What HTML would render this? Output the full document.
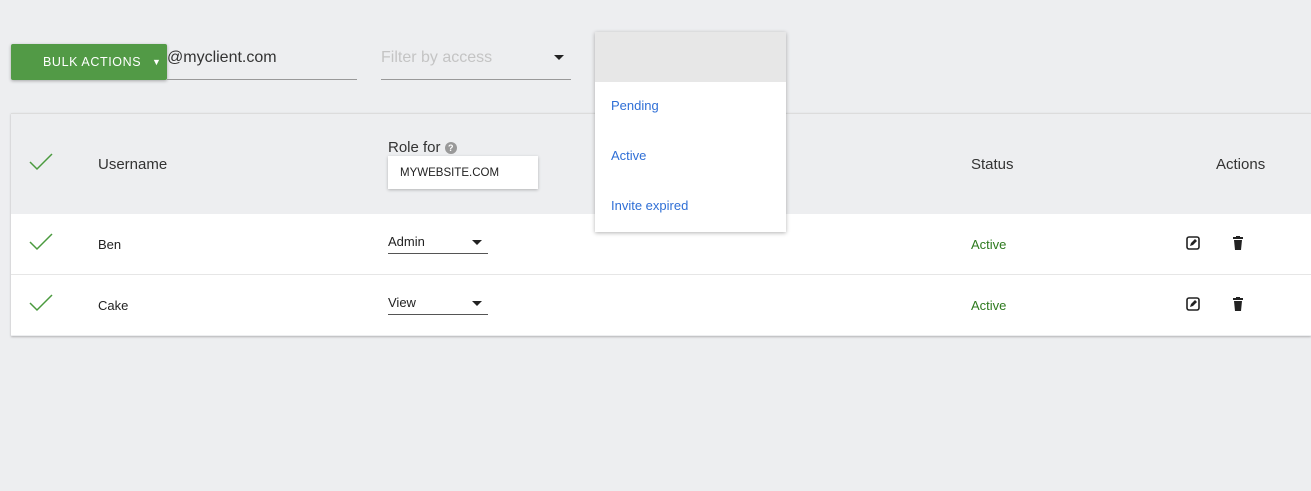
<!DOCTYPE html>
<html><head><meta charset="utf-8"><style>
*{box-sizing:border-box;margin:0;padding:0}
body{width:1311px;height:491px;background:#edeef0;font-family:"Liberation Sans",sans-serif;position:relative;overflow:hidden;color:#333}
.a{position:absolute}
.btn{left:11px;top:44px;width:156px;height:36px;background:#529a46;border-radius:2px;box-shadow:0 1px 3px rgba(0,0,0,.3);color:#fff;font-size:12.5px;letter-spacing:.6px}
.card{left:11px;top:113px;width:1300px;height:223px;border-top:1px solid #dcdcdc;box-shadow:0 1px 2px rgba(0,0,0,.25);background:#edeef0}
.row{position:absolute;left:0;width:1300px;height:60px;background:#fff}
.chk{position:absolute;left:18px}
.sel{position:absolute;left:377px;width:100px;height:20px;border-bottom:1px solid #555;font-size:13px;color:#222}
.sel:after{content:"";position:absolute;right:6px;top:6px;border:5px solid transparent;border-top:5px solid #222;border-bottom:0}
.st{position:absolute;left:960px;font-size:13px;color:#2d7a1e}
</style></head><body>
<div class="a btn"><span class="a" style="left:32px;top:11px">BULK ACTIONS</span><span class="a" style="left:141px;top:13px;font-size:9px">▼</span></div>
<div class="a" style="left:167px;top:49px;font-size:16px;color:#333">@myclient.com</div>
<div class="a" style="left:167px;top:79px;width:190px;height:1px;background:#999"></div>
<div class="a" style="left:381px;top:49px;font-size:16px;color:#c4c4c4">Filter by access</div>
<div class="a" style="left:554px;top:55px;border:5px solid transparent;border-top:5px solid #222;border-bottom:0"></div>
<div class="a" style="left:381px;top:79px;width:190px;height:1px;background:#999"></div>

<div class="a card">
 <svg class="chk" style="top:38px" width="24" height="20" viewBox="0 0 24 20"><path d="M1 10l7 7L23 2" fill="none" stroke="#4a9a3e" stroke-width="1.5"/></svg>
 <div class="a" style="left:87px;top:42px;font-size:15px;color:#333">Username</div>
 <div class="a" style="left:377px;top:25px;font-size:15px;color:#333">Role for <span style="display:inline-block;width:12px;height:12px;border-radius:50%;background:#999;color:#fff;font-size:9px;text-align:center;line-height:12px;font-weight:bold;vertical-align:1px">?</span></div>
 <div class="a" style="left:377px;top:42px;width:150px;height:33px;background:#fff;box-shadow:0 1px 3px rgba(0,0,0,.25);font-size:11.5px;color:#222;padding:11px 0 0 12px">MYWEBSITE.COM</div>
 <div class="a" style="left:960px;top:42px;font-size:15px;color:#333">Status</div>
 <div class="a" style="left:1205px;top:42px;font-size:15px;color:#333">Actions</div>
 <div class="row" style="top:100px">
  <svg class="chk" style="top:18px" width="24" height="20" viewBox="0 0 24 20"><path d="M1 10l7 7L23 2" fill="none" stroke="#4a9a3e" stroke-width="1.5"/></svg>
  <div class="a" style="left:87px;top:23px;font-size:13px;color:#222">Ben</div>
  <div class="sel" style="top:20px">Admin</div>
  <div class="st" style="top:23px">Active</div>
  <svg class="a" style="left:1175px;top:22px" width="14" height="14" viewBox="0 0 14 14"><rect x="1" y="1" width="12" height="12" rx="2" fill="none" stroke="#222" stroke-width="1.6"/><path d="M4 10l1-3 4-4 2 2-4 4z" fill="#222"/></svg>
  <svg class="a" style="left:1221px;top:22px" width="12" height="14" viewBox="0 0 12 14"><rect x="1" y="1" width="10" height="2" fill="#222"/><rect x="4" y="0" width="4" height="2" fill="#222"/><path d="M2 4h8l-1 10H3z" fill="#222"/></svg>
 </div>
 <div class="row" style="top:161px">
  <svg class="chk" style="top:18px" width="24" height="20" viewBox="0 0 24 20"><path d="M1 10l7 7L23 2" fill="none" stroke="#4a9a3e" stroke-width="1.5"/></svg>
  <div class="a" style="left:87px;top:23px;font-size:13px;color:#222">Cake</div>
  <div class="sel" style="top:20px">View</div>
  <div class="st" style="top:23px">Active</div>
  <svg class="a" style="left:1175px;top:22px" width="14" height="14" viewBox="0 0 14 14"><rect x="1" y="1" width="12" height="12" rx="2" fill="none" stroke="#222" stroke-width="1.6"/><path d="M4 10l1-3 4-4 2 2-4 4z" fill="#222"/></svg>
  <svg class="a" style="left:1221px;top:22px" width="12" height="14" viewBox="0 0 12 14"><rect x="1" y="1" width="10" height="2" fill="#222"/><rect x="4" y="0" width="4" height="2" fill="#222"/><path d="M2 4h8l-1 10H3z" fill="#222"/></svg>
 </div>
 <div class="a" style="left:0;top:160px;width:1300px;height:1px;background:#e6e6e6"></div>
</div>

<div class="a" style="left:595px;top:32px;width:191px;height:200px;background:#fff;box-shadow:0 1px 4px rgba(0,0,0,.3)">
 <div style="height:50px;background:#e7e7e7"></div>
 <div class="a" style="left:16px;top:66px;font-size:13px;color:#2f6fd6">Pending</div>
 <div class="a" style="left:16px;top:116px;font-size:13px;color:#2f6fd6">Active</div>
 <div class="a" style="left:16px;top:166px;font-size:13px;color:#2f6fd6">Invite expired</div>
</div>
</body></html>
